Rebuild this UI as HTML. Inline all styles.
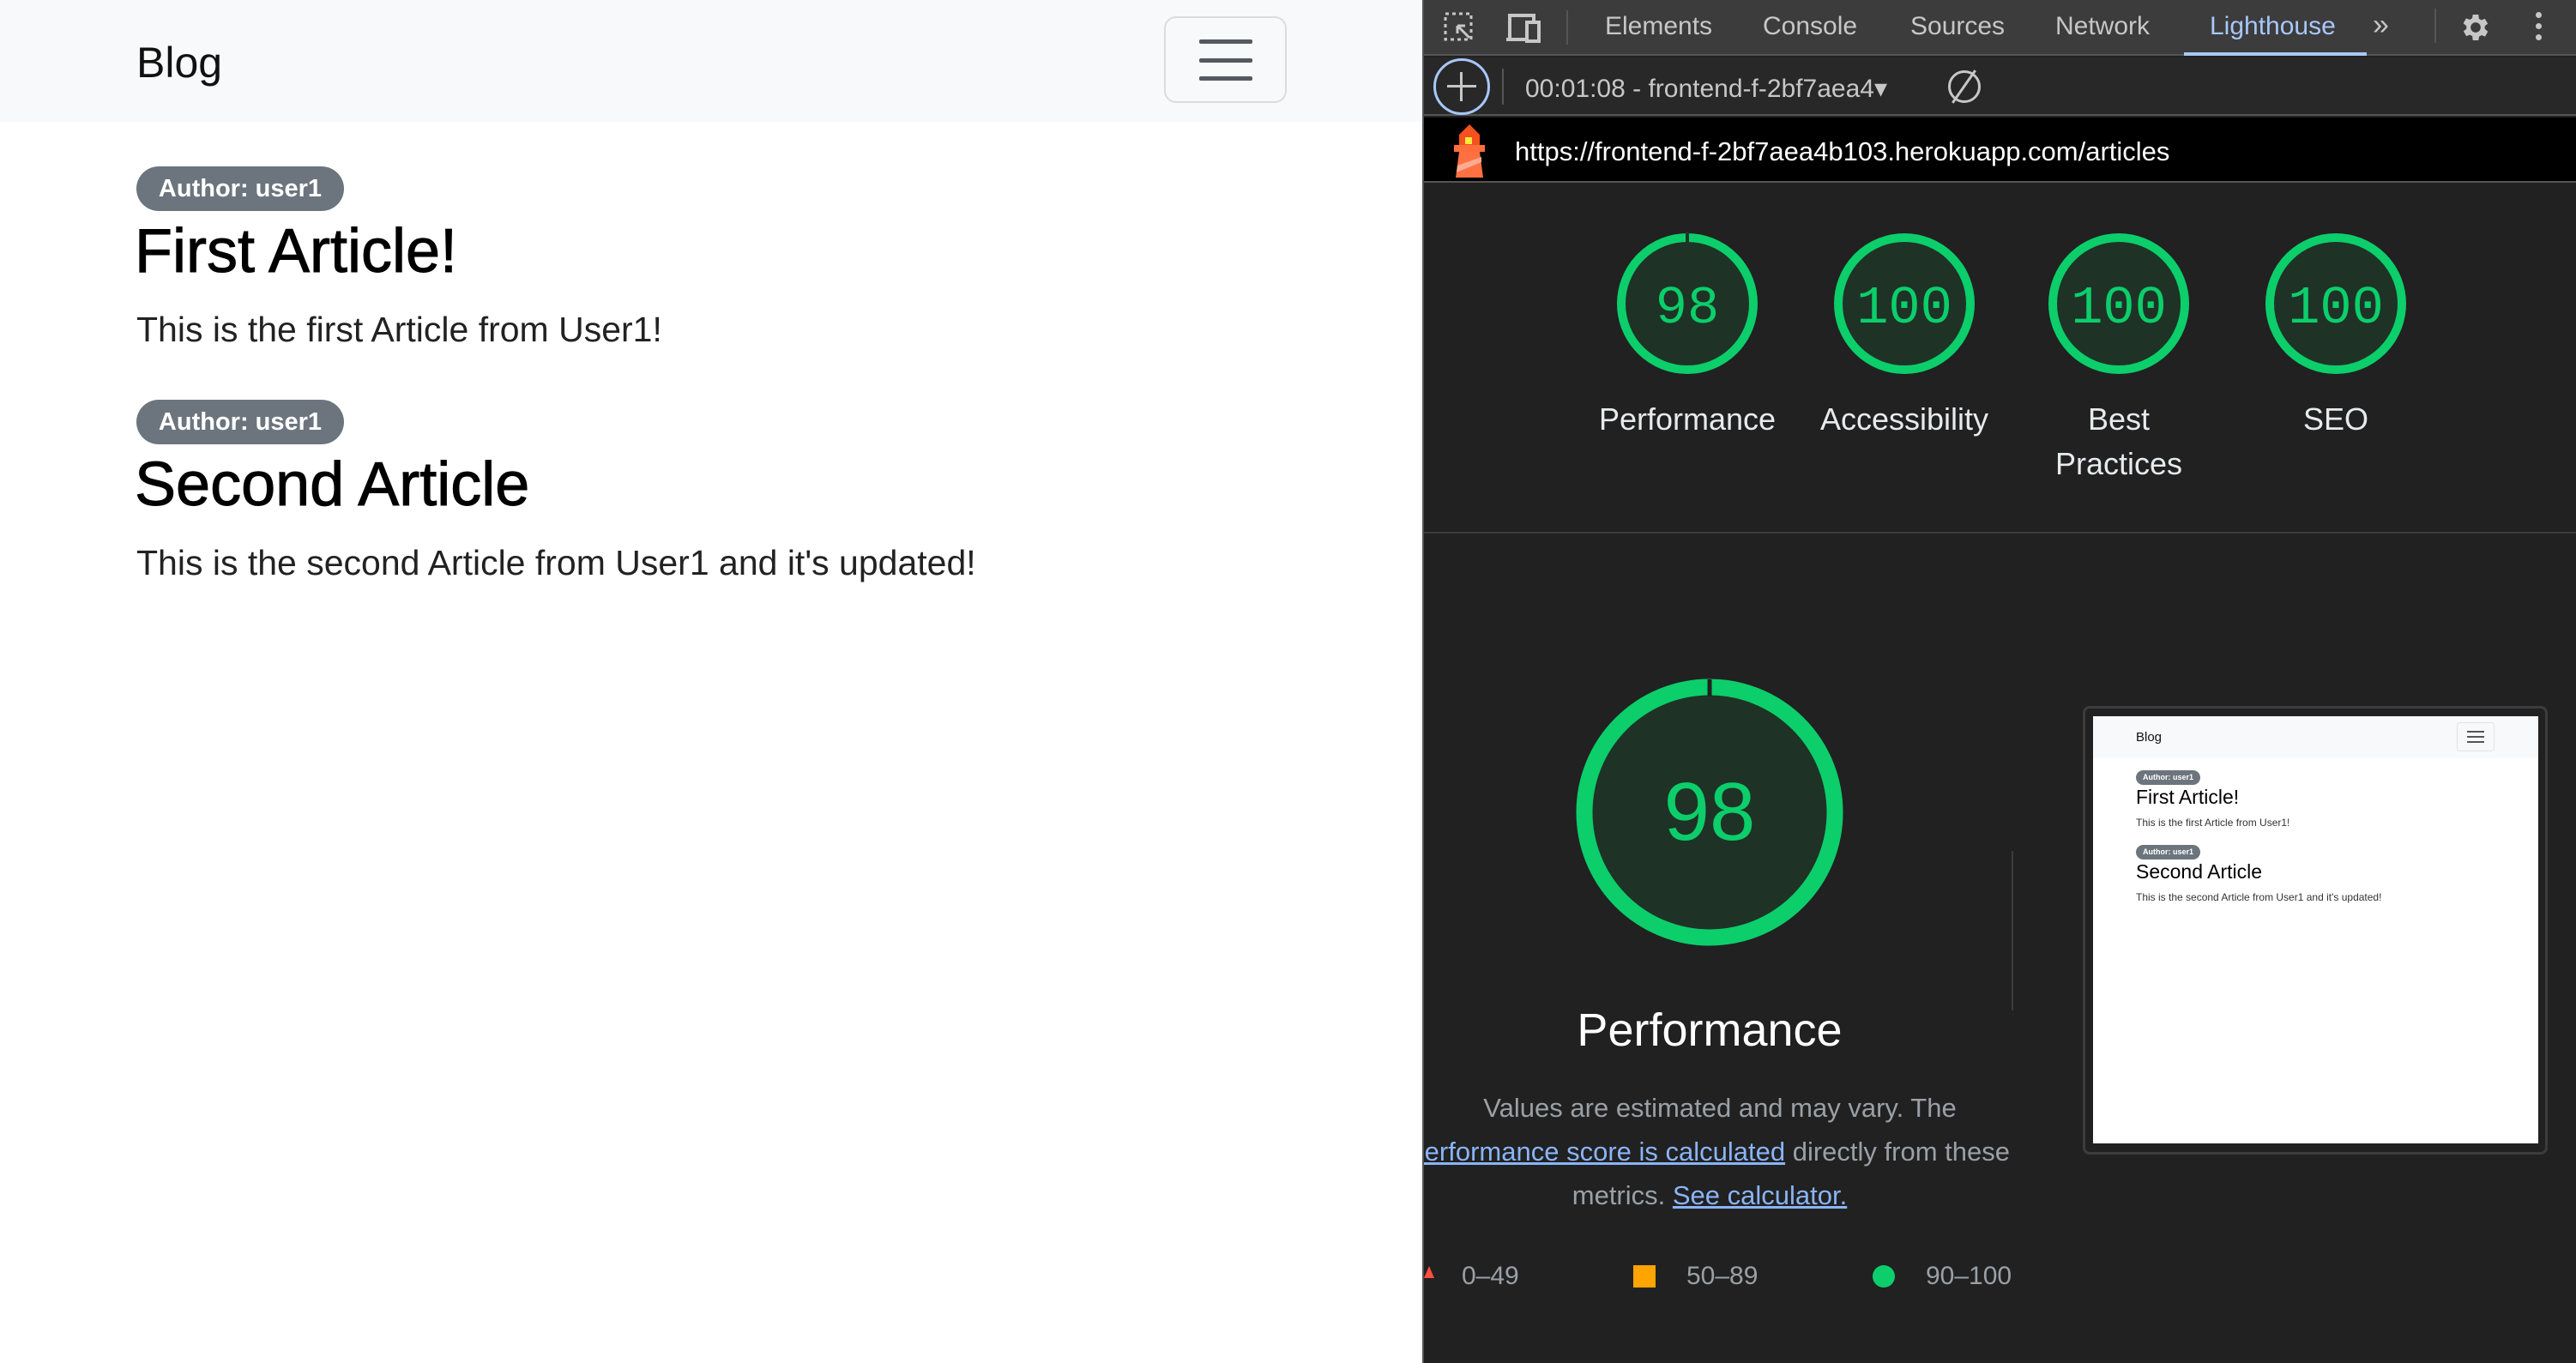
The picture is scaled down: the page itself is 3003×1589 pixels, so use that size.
<!DOCTYPE html>
<html><head><meta charset="utf-8"><style>
*{margin:0;padding:0;box-sizing:border-box}
body{width:3003px;height:1589px;position:relative;overflow:hidden;background:#fff;font-family:"Liberation Sans",sans-serif}
.a{position:absolute;white-space:nowrap}
.badge{position:absolute;background:#6c757d;color:#fff;font-weight:bold;border-radius:26px;text-align:center}
.tab{position:absolute;top:14px;font-size:30px;color:#c7c7c7}
.gl{position:absolute;font-size:36px;color:#e8eaed;text-align:center;width:260px}
</style></head><body>
<!-- left page -->
<div class="a" style="left:0;top:0;width:1659px;height:142px;background:#f8f9fa"></div>
<div class="a" style="left:159px;top:44px;font-size:50px;color:#111">Blog</div>
<div class="a" style="left:1357px;top:19px;width:143px;height:101px;border:2px solid #dcdcdc;border-radius:14px"></div>
<div class="a" style="left:1398px;top:46px;width:62px;height:5px;background:#555a60;border-radius:2px"></div>
<div class="a" style="left:1398px;top:68px;width:62px;height:5px;background:#555a60;border-radius:2px"></div>
<div class="a" style="left:1398px;top:89px;width:62px;height:5px;background:#555a60;border-radius:2px"></div>

<div class="badge" style="left:159px;top:194px;width:242px;height:52px;font-size:29px;line-height:52px">Author: user1</div>
<div class="a" style="left:157px;top:252px;font-size:72px;color:#000;-webkit-text-stroke:1px #000">First Article!</div>
<div class="a" style="left:159px;top:361px;font-size:41px;color:#222">This is the first Article from User1!</div>
<div class="badge" style="left:159px;top:466px;width:242px;height:52px;font-size:29px;line-height:52px">Author: user1</div>
<div class="a" style="left:157px;top:524px;font-size:72px;color:#000;-webkit-text-stroke:1px #000">Second Article</div>
<div class="a" style="left:159px;top:633px;font-size:41px;color:#222">This is the second Article from User1 and it's updated!</div>

<!-- devtools -->
<div class="a" style="left:1658px;top:0;width:1345px;height:1589px;background:#212121;border-left:2px solid #555"></div>
<div class="a" style="left:1660px;top:0;width:1343px;height:65px;background:#3c3c3c;border-bottom:2px solid #555"></div>
<svg class="a" style="left:1683px;top:14px" width="36" height="36" viewBox="0 0 36 36"><rect x="2" y="2" width="30" height="30" fill="none" stroke="#c7c7c7" stroke-width="3" stroke-dasharray="4 4"/><path d="M16 16 L30 30 M16 16 h9 M16 16 v9" stroke="#c7c7c7" stroke-width="3" fill="none"/></svg>
<svg class="a" style="left:1754px;top:14px" width="44" height="38" viewBox="0 0 44 38"><path d="M6 32 V4 H34 V10 M2 32 H24" stroke="#c7c7c7" stroke-width="4" fill="none"/><rect x="26" y="12" width="14" height="22" fill="none" stroke="#c7c7c7" stroke-width="4"/></svg>
<div class="a" style="left:1826px;top:12px;width:2px;height:40px;background:#555"></div>
<div class="tab" style="left:1871px">Elements</div>
<div class="tab" style="left:2055px">Console</div>
<div class="tab" style="left:2227px">Sources</div>
<div class="tab" style="left:2396px">Network</div>
<div class="tab" style="left:2576px;color:#a8c7fa">Lighthouse</div>
<div class="a" style="left:2546px;top:61px;width:213px;height:4px;background:#a8c7fa"></div>
<div class="tab" style="left:2766px;font-size:34px;top:10px">»</div>
<div class="a" style="left:2838px;top:10px;width:2px;height:40px;background:#555"></div>
<svg class="a" style="left:2866px;top:12px" width="40" height="40" viewBox="0 0 24 24"><path fill="#c7c7c7" d="M19.4 13a7.5 7.5 0 000-2l2.1-1.6-2-3.5-2.5 1a7 7 0 00-1.7-1L15 3h-4l-.4 2.6a7 7 0 00-1.7 1l-2.5-1-2 3.5L6.6 11a7.5 7.5 0 000 2l-2.1 1.6 2 3.5 2.5-1a7 7 0 001.7 1L11 21h4l.4-2.6a7 7 0 001.7-1l2.5 1 2-3.5zM13 15.5a3.5 3.5 0 110-7 3.5 3.5 0 010 7z" transform="translate(-1 0)"/></svg>
<div class="a" style="left:2956px;top:14px;width:7px;height:7px;border-radius:50%;background:#c7c7c7;box-shadow:0 13px 0 #c7c7c7,0 26px 0 #c7c7c7"></div>

<div class="a" style="left:1660px;top:67px;width:1343px;height:68px;background:#282828;border-bottom:2px solid #555"></div>
<div class="a" style="left:1671px;top:68px;width:66px;height:66px;border:3px solid #a8c7fa;border-radius:50%"></div>
<div class="a" style="left:1687px;top:99px;width:34px;height:3px;background:#c7c7c7"></div>
<div class="a" style="left:1702px;top:84px;width:3px;height:34px;background:#c7c7c7"></div>
<div class="a" style="left:1751px;top:80px;width:2px;height:42px;background:#555"></div>
<div class="a" style="left:1778px;top:86px;font-size:30px;color:#c7c7c7">00:01:08 - frontend-f-2bf7aea4▾</div>
<div class="a" style="left:2271px;top:82px;width:38px;height:38px;border:3px solid #c7c7c7;border-radius:50%"></div>
<div class="a" style="left:2288px;top:78px;width:3px;height:46px;background:#c7c7c7;transform:rotate(35deg)"></div>

<div class="a" style="left:1660px;top:137px;width:1343px;height:76px;background:#000;border-bottom:2px solid #555"></div>
<svg class="a" style="left:1693px;top:145px" width="40" height="62" viewBox="0 0 40 62"><path d="M20 0 L32 12 H8 Z" fill="#f4511e"/><rect x="8" y="12" width="24" height="14" fill="#f4511e"/><rect x="15" y="15" width="8" height="8" fill="#ffeb3b"/><rect x="2" y="24" width="36" height="8" fill="#ff6d3a"/><path d="M8 32 H32 L36 62 H4 Z" fill="#ff7043"/><path d="M6 48 L34 38 V44 L5 56 Z" fill="#ffab91"/></svg>
<div class="a" style="left:1766px;top:159px;font-size:31px;color:#fff">https://frontend-f-2bf7aea4b103.herokuapp.com/articles</div>

<!-- gauges -->
<svg class="a" style="left:1660px;top:240px" width="1343" height="240">
<g fill="#1e3326" stroke="#0cce6b" stroke-width="10">
<circle cx="307" cy="114" r="77"/><circle cx="560" cy="114" r="77"/><circle cx="810" cy="114" r="77"/><circle cx="1063" cy="114" r="77"/></g>
<line x1="307" y1="30" x2="307" y2="42" stroke="#1e3326" stroke-width="4"/>
<g fill="#0cce6b" font-family="Liberation Mono,monospace" font-size="62" text-anchor="middle">
<text x="307" y="136">98</text><text x="560" y="136">100</text><text x="810" y="136">100</text><text x="1063" y="136">100</text></g>
</svg>
<div class="gl" style="left:1837px;top:468px">Performance</div>
<div class="gl" style="left:2090px;top:468px">Accessibility</div>
<div class="gl" style="left:2340px;top:468px">Best</div>
<div class="gl" style="left:2340px;top:520px">Practices</div>
<div class="gl" style="left:2593px;top:468px">SEO</div>
<div class="a" style="left:1660px;top:620px;width:1343px;height:2px;background:#3c3c3c"></div>

<!-- big gauge -->
<svg class="a" style="left:1820px;top:774px" width="346" height="346">
<circle cx="173" cy="173" r="146" fill="#1e3326" stroke="#0cce6b" stroke-width="19"/>
<line x1="173" y1="18" x2="173" y2="38" stroke="#212121" stroke-width="5"/>
<text x="173" y="205" text-anchor="middle" fill="#0cce6b" font-family="Liberation Sans,sans-serif" font-size="96">98</text>
</svg>
<div class="a" style="left:1837px;top:1170px;width:312px;text-align:center;font-size:54px;color:#fff">Performance</div>
<div class="a" style="left:1660px;top:1266px;width:690px;text-align:center;font-size:31px;line-height:52px;color:#9aa0a6">Values are estimated and may vary. The</div>
<div class="a" style="left:1660px;top:1317px;width:690px;overflow:hidden;height:52px;line-height:52px;font-size:31px;color:#9aa0a6"><span style="margin-left:-20px;color:#8ab4f8;text-decoration:underline">Performance score is calculated</span> directly from these</div>
<div class="a" style="left:1648px;top:1368px;width:690px;text-align:center;font-size:31px;line-height:52px;color:#9aa0a6">metrics. <span style="color:#8ab4f8;text-decoration:underline">See calculator.</span></div>
<div class="a" style="left:2345px;top:992px;width:2px;height:186px;background:#3c3c3c"></div>

<div class="a" style="left:1660px;top:1476px;width:0;height:0;border-left:6px solid transparent;border-right:6px solid transparent;border-bottom:14px solid #ff4e42"></div>
<div class="a" style="left:1704px;top:1471px;font-size:30px;color:#9aa0a6">0–49</div>
<div class="a" style="left:1904px;top:1475px;width:26px;height:26px;background:#ffa400"></div>
<div class="a" style="left:1966px;top:1471px;font-size:30px;color:#9aa0a6">50–89</div>
<div class="a" style="left:2183px;top:1475px;width:26px;height:26px;border-radius:50%;background:#0cce6b"></div>
<div class="a" style="left:2245px;top:1471px;font-size:30px;color:#9aa0a6">90–100</div>

<!-- screenshot thumbnail -->
<div class="a" style="left:2428px;top:823px;width:542px;height:523px;border:3px solid #3c3c3c;border-radius:8px;background:#212121"></div>
<div class="a" style="left:2440px;top:835px;width:519px;height:498px;background:#fff;overflow:hidden">
 <div class="a" style="left:0;top:0;width:519px;height:49px;background:#f8f9fa"></div>
 <div class="a" style="left:50px;top:16px;font-size:15px;color:#111">Blog</div>
 <div class="a" style="left:424px;top:7px;width:44px;height:34px;border:1px solid #e2e2e2;border-radius:4px"></div>
 <div class="a" style="left:436px;top:17px;width:20px;height:2px;background:#555;box-shadow:0 6px 0 #555,0 12px 0 #555"></div>
 <div class="badge" style="left:50px;top:63px;width:75px;height:17px;font-size:9px;line-height:17px">Author: user1</div>
 <div class="a" style="left:50px;top:81px;font-size:23px;color:#000">First Article!</div>
 <div class="a" style="left:50px;top:117px;font-size:12px;color:#333">This is the first Article from User1!</div>
 <div class="badge" style="left:50px;top:150px;width:75px;height:17px;font-size:9px;line-height:17px">Author: user1</div>
 <div class="a" style="left:50px;top:168px;font-size:23px;color:#000">Second Article</div>
 <div class="a" style="left:50px;top:204px;font-size:12px;color:#333">This is the second Article from User1 and it's updated!</div>
</div>
</body></html>
